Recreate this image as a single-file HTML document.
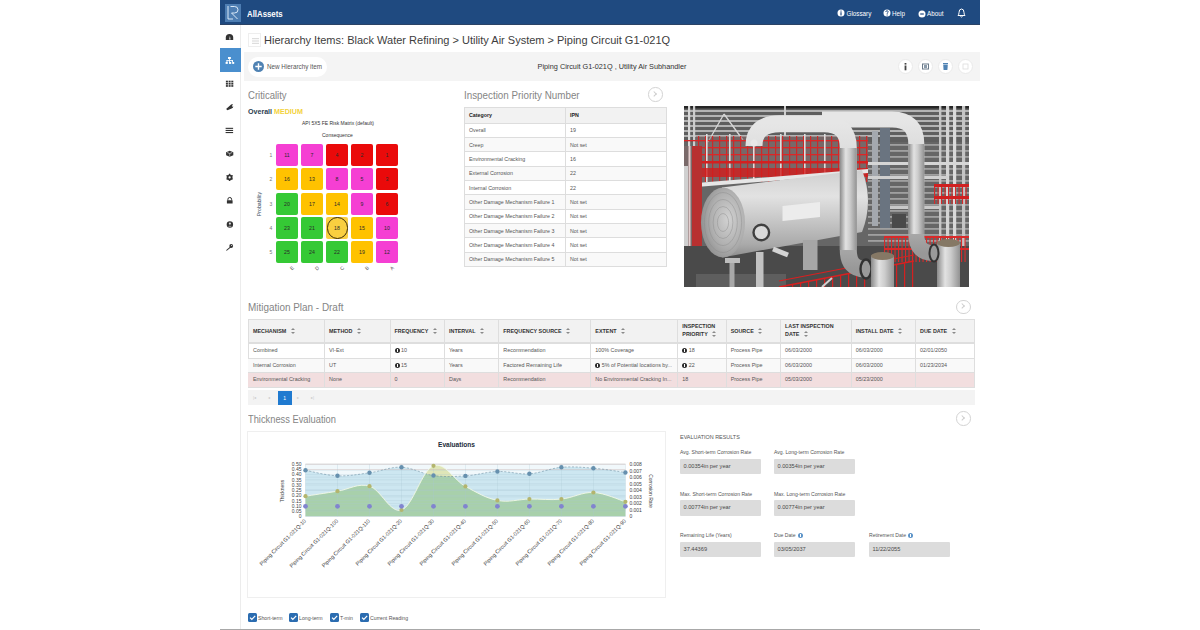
<!DOCTYPE html>
<html><head><meta charset="utf-8">
<style>
*{margin:0;padding:0;box-sizing:border-box}
html,body{width:1200px;height:630px;overflow:hidden;background:#fff;font-family:"Liberation Sans",sans-serif;color:#555}
.a{position:absolute}
#hdr{left:220px;top:0;width:760px;height:24.5px;background:#1f4a80;box-shadow:inset 0 -1px #2b4366}
#logo{left:5px;top:4px;width:16px;height:17.6px;background:#4d7db2}
#brand{left:26.5px;top:8.5px;font-size:9px;font-weight:bold;color:#fff;transform:scaleX(0.87);transform-origin:0 0}
.nav{top:9.5px;font-size:6.3px;color:#fff}
.nav i{position:absolute;left:-6px;top:0.5px;width:6.5px;height:6.5px;border-radius:50%;background:#fff}
#side{left:220px;top:25px;width:21px;height:606px;border-right:1px solid #ececec;background:#fff}
.si{left:0;width:20px;height:23px}
.si svg{position:absolute;left:6px;top:8px}
#act{left:220px;top:48px;width:21px;height:24px;background:#4a8fce}
#title{left:264px;top:34px;font-size:11px;color:#3d3d3d;white-space:nowrap}
#tgl{left:248px;top:33px;width:13px;height:14px;border:1px solid #eee;background:#fff}
#tbar{left:244px;top:52px;width:736px;height:29px;background:#f4f4f4}
#newbtn{left:4px;top:5px;width:79px;height:20px;border-radius:10px;background:#fff}
#tbtitle{left:0;width:736px;top:10px;text-align:center;font-size:7.3px;color:#333}
.cb{top:7px;width:15px;height:15px;border-radius:50%;background:#fff;border:1px solid #eaeaea}
.h2{font-size:11px;color:#858585;font-weight:normal;white-space:nowrap;transform-origin:0 0}
.arr{width:14.5px;height:14.5px;border-radius:50%;border:1.8px solid #d3d3d3}
.arr:after{content:"";position:absolute;left:3px;top:3.7px;width:3.2px;height:3.2px;border-right:1.3px solid #cdcdcd;border-top:1.3px solid #cdcdcd;transform:rotate(45deg)}
.cell{width:22px;height:22px;border-radius:2px;font-size:5.2px;color:#2a2a2a;text-align:center;line-height:22px}
.rl{left:269.5px;font-size:5px;color:#777}
.clb{top:265px;font-size:5px;color:#555;transform:rotate(-45deg)}
.ipn{border-collapse:collapse;width:203px;font-size:5.3px;color:#555}
.ipn td,.ipn th{border:1px solid #ddd;height:14.35px;padding:0 0 0 4px;text-align:left;white-space:nowrap}
.ipn th{font-weight:bold;color:#222}
.ipn td:first-child,.ipn th:first-child{width:101px}
.mth{font-size:5.4px;font-weight:bold;color:#333;line-height:7px;white-space:nowrap}
.mtd{font-size:5.4px;color:#555;white-space:nowrap;line-height:6px}
.srt{display:inline-block;position:relative;width:4px;height:6px;margin-left:4.5px;vertical-align:-1px}
.srt:before,.srt:after{content:"";position:absolute;left:0;border-left:2px solid transparent;border-right:2px solid transparent}
.srt:before{top:0;border-bottom:2.4px solid #8a8a8a}
.srt:after{bottom:0;border-top:2.4px solid #8a8a8a}
.ic{display:inline-block;position:relative;width:5px;height:5px;border-radius:50%;background:#2a2a2a;margin-right:1.5px;vertical-align:-0.8px}
.ic:after{content:"";position:absolute;left:2.1px;top:1px;width:0.9px;height:3px;background:#fff}
.elab{font-size:5.1px;color:#555;white-space:nowrap;line-height:6px}
.ebox{width:80.6px;height:15.6px;background:#dcdcdc;font-size:5.65px;color:#4a4a4a;line-height:15.6px;padding-left:3.5px;white-space:nowrap;border-radius:1px}
.inf{display:inline-block;position:relative;width:5px;height:5px;border-radius:50%;background:#5b93c8;margin-left:2px;vertical-align:-0.8px}
.inf:after{content:"";position:absolute;left:2.1px;top:1px;width:0.9px;height:3px;background:#fff}
.chk{top:612.5px;width:9px;height:9.3px;background:#2b6cb0;border-radius:1.5px}
.chk svg{position:absolute;left:0;top:0}
.ctx{top:614.5px;font-size:5.2px;color:#555;white-space:nowrap}
</style></head><body>
<div id="hdr" class="a">
  <div id="logo" class="a">
    <svg width="16" height="17" viewBox="0 0 16 17" style="position:absolute;left:0;top:0">
      <path d="M3 2 V15 H8" fill="none" stroke="#e8f4ff" stroke-width="0.9"/>
      <path d="M5.5 2.5 H9.5 Q13 2.5 13 5.8 Q13 9 9.5 9 H6.5 L12.5 15" fill="none" stroke="#e8f4ff" stroke-width="0.9"/>
    </svg>
  </div>
  <div id="brand" class="a">AllAssets</div>
  <svg class="a" style="left:617px;top:9px" width="8" height="8" viewBox="0 0 8 8"><circle cx="4" cy="4" r="3.5" fill="#fff"/><rect x="3.4" y="1.6" width="1.2" height="1" fill="#1f4a82"/><rect x="3.4" y="3.2" width="1.2" height="3.2" fill="#1f4a82"/></svg>
  <div class="a nav" style="left:626.5px">Glossary</div>
  <svg class="a" style="left:662.5px;top:9px" width="8" height="8" viewBox="0 0 8 8"><circle cx="4" cy="4" r="3.5" fill="#fff"/><path d="M2.8 3 Q2.8 1.7 4 1.7 Q5.2 1.7 5.2 2.9 Q5.2 3.6 4.2 4.1 V4.9" fill="none" stroke="#1f4a82" stroke-width="0.9"/><rect x="3.6" y="5.5" width="1.1" height="1" fill="#1f4a82"/></svg>
  <div class="a nav" style="left:672px">Help</div>
  <svg class="a" style="left:698px;top:9.5px" width="8" height="8" viewBox="0 0 8 8"><circle cx="4" cy="4" r="3.5" fill="#fff"/><rect x="2.2" y="3.4" width="3.6" height="1.2" fill="#1f4a82"/></svg>
  <div class="a nav" style="left:707px">About</div>
  <svg class="a" style="left:737px;top:7px" width="9" height="11" viewBox="0 0 9 11"><path d="M1 8.5 Q2 7.5 2 5.5 Q2 2 4.5 2 Q7 2 7 5.5 Q7 7.5 8 8.5 Z M3.5 9.5 Q4.5 10.5 5.5 9.5" fill="none" stroke="#fff" stroke-width="1"/></svg>
</div>
<div id="side" class="a"></div>
<div id="act" class="a"></div>

<svg class="a" style="left:220px;top:24px" width="21" height="240" viewBox="0 0 21 240">
 <g fill="#333">
  <path d="M5.8 16 V13.6 A3.7 3.7 0 0 1 13.2 13.6 V16 Z"/>
  <path d="M9.2 15.6 L9.9 11.8 L10.5 15.6 Z" fill="#fff"/>
  <g fill="#fff"><rect x="8" y="33" width="2.9" height="2"/><rect x="6.5" y="36.2" width="6.5" height="0.9"/><rect x="6.5" y="36.2" width="0.9" height="2"/><rect x="12.1" y="36.2" width="0.9" height="2"/><rect x="9.1" y="35" width="0.8" height="3"/><rect x="5.6" y="38" width="2.2" height="1.9"/><rect x="9" y="38" width="2.2" height="1.9"/><rect x="12.2" y="38" width="2" height="1.9"/></g>
  <rect x="5.9" y="56.7" width="2" height="1.7"/><rect x="8.6" y="56.7" width="2" height="1.7"/><rect x="11.3" y="56.7" width="2" height="1.7"/>
  <rect x="5.9" y="58.9" width="2" height="1.7"/><rect x="8.6" y="58.9" width="2" height="1.7"/><rect x="11.3" y="58.9" width="2" height="1.7"/>
  <rect x="5.9" y="61.1" width="2" height="1.7"/><rect x="8.6" y="61.1" width="2" height="1.7"/><rect x="11.3" y="61.1" width="2" height="1.7"/>
  <path d="M6.1 85 L10.3 81.3 A2.3 2.3 0 0 1 13.1 80.6 L11.8 82 L12.3 82.8 L13.3 82.3 A2.3 2.3 0 0 1 11.6 84.5 L7.4 86.3 Z"/>
  <rect x="5.6" y="103.8" width="7.5" height="1.1"/><rect x="5.6" y="105.9" width="7.5" height="1.1"/><rect x="5.6" y="108" width="7.5" height="1.1"/>
  <path d="M9.7 126.8 L13.3 128.3 V131.3 L9.7 132.8 L6.1 131.3 V128.3 Z"/>
  <path d="M7.2 128.5 L9.7 129.5 L12.2 128.5" fill="none" stroke="#fff" stroke-width="0.6"/>
  <path d="M9.7 129.5 V132.3" stroke="#fff" stroke-width="0.5"/>
  <circle cx="9.6" cy="153.4" r="2.9"/>
  <g stroke="#333" stroke-width="1.2"><path d="M9.6 149.8 V157 M6.5 151.6 L12.7 155.2 M6.5 155.2 L12.7 151.6"/></g>
  <circle cx="9.6" cy="153.4" r="1.1" fill="#fff"/>
  <rect x="6.9" y="176.2" width="5.7" height="3.4" rx="0.4"/>
  <path d="M7.9 176.4 V175.3 A1.85 1.85 0 0 1 11.6 175.3 V176.4" fill="none" stroke="#333" stroke-width="1"/>
  <circle cx="9.9" cy="200.5" r="3.2"/>
  <circle cx="9.9" cy="199.6" r="1.1" fill="#ddd"/>
  <path d="M8 202.6 Q9.9 200.8 11.8 202.6 Z" fill="#ddd"/>
  <circle cx="11.2" cy="222" r="1.9"/>
  <path d="M10.4 222.6 L6 226.2 L6.8 226.8 L11.1 223.2 Z"/>
  <circle cx="11.6" cy="221.6" r="0.5" fill="#fff"/>
 </g>
</svg>
<div id="tgl" class="a"><svg class="a" style="left:3px;top:4px" width="7" height="6" viewBox="0 0 7 6"><rect x="0" y="0" width="7" height="1.2" fill="#ddd"/><rect x="0" y="2.4" width="7" height="1.2" fill="#ddd"/><rect x="0" y="4.8" width="7" height="1.2" fill="#ddd"/></svg></div>
<div id="title" class="a">Hierarchy Items: Black Water Refining &gt; Utility Air System &gt; Piping Circuit G1-021Q</div>
<div id="tbar" class="a">
  <div id="newbtn" class="a"><div class="a" style="left:4.5px;top:3.9px;width:11px;height:11px;border-radius:50%;background:#4f82b3"></div><svg class="a" style="left:4.5px;top:3.9px" width="11" height="11" viewBox="0 0 11 11"><path d="M5.5 2.3 V8.7 M2.3 5.5 H8.7" stroke="#fff" stroke-width="1.4"/></svg><div class="a" style="left:19px;top:6px;font-size:6.3px;color:#555;white-space:nowrap">New Hierarchy item</div></div>
  <div class="a cb" style="left:653.5px"><svg class="a" style="left:0;top:0" width="13" height="13" viewBox="0 0 13 13"><rect x="5.6" y="3" width="1.8" height="1.6" fill="#444"/><rect x="5.6" y="5.5" width="1.8" height="4.8" fill="#444"/></svg></div>
  <div class="a cb" style="left:673.5px"><svg class="a" style="left:0;top:0" width="13" height="13" viewBox="0 0 13 13"><rect x="3.5" y="4" width="6" height="5" fill="none" stroke="#6a7a8a" stroke-width="1"/><rect x="5" y="5" width="3" height="3" fill="#8a9aaa"/></svg></div>
  <div class="a cb" style="left:694px"><svg class="a" style="left:0;top:0" width="13" height="13" viewBox="0 0 13 13"><rect x="4" y="3" width="5" height="1" fill="#4f82b3"/><path d="M4.2 4.5 H8.8 L8.4 10 H4.6 Z" fill="#4f82b3"/></svg></div>
  <div class="a cb" style="left:714px"><svg class="a" style="left:0;top:0" width="13" height="13" viewBox="0 0 13 13"><rect x="4" y="4" width="5" height="5" fill="none" stroke="#ddd" stroke-width="0.8"/></svg></div>
  <div id="tbtitle" class="a">Piping Circuit G1-021Q , Utility Air Subhandler</div>
</div>

<div class="a h2" style="left:248px;top:89px;transform:scaleX(0.866)">Criticality</div>
<div class="a" style="left:248px;top:108px;font-size:7.1px;font-weight:bold;color:#2c3e50">Overall <span style="color:#f3d23c">MEDIUM</span></div>
<div class="a" style="left:302px;top:120px;font-size:5px;color:#333;white-space:nowrap">API 5X5 FE Risk Matrix (default)</div>
<div class="a" style="left:322px;top:131.7px;font-size:5px;color:#333">Consequence</div>
<div class="a cell" style="left:276px;top:144px;background:#f53fd3">11</div>
<div class="a cell" style="left:301px;top:144px;background:#f53fd3">7</div>
<div class="a cell" style="left:326px;top:144px;background:#ea0a0a">4</div>
<div class="a cell" style="left:351px;top:144px;background:#ea0a0a">2</div>
<div class="a cell" style="left:376px;top:144px;background:#ea0a0a">1</div>
<div class="a cell" style="left:276px;top:168.3px;background:#ffc200">16</div>
<div class="a cell" style="left:301px;top:168.3px;background:#ffc200">13</div>
<div class="a cell" style="left:326px;top:168.3px;background:#f53fd3">8</div>
<div class="a cell" style="left:351px;top:168.3px;background:#f53fd3">5</div>
<div class="a cell" style="left:376px;top:168.3px;background:#ea0a0a">3</div>
<div class="a cell" style="left:276px;top:192.6px;background:#35c935">20</div>
<div class="a cell" style="left:301px;top:192.6px;background:#ffc200">17</div>
<div class="a cell" style="left:326px;top:192.6px;background:#ffc200">14</div>
<div class="a cell" style="left:351px;top:192.6px;background:#f53fd3">9</div>
<div class="a cell" style="left:376px;top:192.6px;background:#ea0a0a">6</div>
<div class="a cell" style="left:276px;top:217px;background:#35c935">23</div>
<div class="a cell" style="left:301px;top:217px;background:#35c935">21</div>
<div class="a cell" style="left:326px;top:217px;background:#f9cf40">18</div>
<div class="a cell" style="left:351px;top:217px;background:#ffc200">15</div>
<div class="a cell" style="left:376px;top:217px;background:#f53fd3">10</div>
<div class="a cell" style="left:276px;top:241.3px;background:#35c935">25</div>
<div class="a cell" style="left:301px;top:241.3px;background:#35c935">24</div>
<div class="a cell" style="left:326px;top:241.3px;background:#35c935">22</div>
<div class="a cell" style="left:351px;top:241.3px;background:#ffc200">19</div>
<div class="a cell" style="left:376px;top:241.3px;background:#f53fd3">12</div>

<div class="a" style="left:326.5px;top:217px;width:21.5px;height:21.5px;border:1.5px solid #3a2c08;border-radius:50%"></div>
<div class="a rl" style="top:152px">1</div><div class="a rl" style="top:176.3px">2</div><div class="a rl" style="top:200.6px">3</div><div class="a rl" style="top:225px">4</div><div class="a rl" style="top:249.3px">5</div><div class="a clb" style="left:290.0px">E</div><div class="a clb" style="left:315.0px">D</div><div class="a clb" style="left:340.0px">C</div><div class="a clb" style="left:365.0px">B</div><div class="a clb" style="left:390.0px">A</div>
<div class="a" style="left:244px;top:201px;width:30px;font-size:5.2px;color:#34495e;transform:rotate(-90deg);text-align:center">Probability</div>

<div class="a h2" style="left:464px;top:89px;transform:scaleX(0.892)">Inspection Priority Number</div>
<div class="a arr" style="left:648.3px;top:87.2px"></div>
<table class="a ipn" style="left:464px;top:107px">
<tr style="background:#f2f2f2"><th style="height:15.5px">Category</th><th>IPN</th></tr>
<tr style="background:#fff"><td>Overall</td><td>19</td></tr><tr style="background:#f9f9f9"><td>Creep</td><td>Not set</td></tr><tr style="background:#fff"><td>Environmental Cracking</td><td>16</td></tr><tr style="background:#f9f9f9"><td>External Corrosion</td><td>22</td></tr><tr style="background:#fff"><td>Internal Corrosion</td><td>22</td></tr><tr style="background:#f9f9f9"><td>Other Damage Mechanism Failure 1</td><td>Not set</td></tr><tr style="background:#fff"><td>Other Damage Mechanism Failure 2</td><td>Not set</td></tr><tr style="background:#f9f9f9"><td>Other Damage Mechanism Failure 3</td><td>Not set</td></tr><tr style="background:#fff"><td>Other Damage Mechanism Failure 4</td><td>Not set</td></tr><tr style="background:#f9f9f9"><td>Other Damage Mechanism Failure 5</td><td>Not set</td></tr>
</table>

<svg class="a" style="left:684px;top:106px" width="285" height="181" viewBox="0 0 285 181">
 <defs>
  <linearGradient id="vg" x1="0" y1="0" x2="0" y2="1">
   <stop offset="0" stop-color="#cfcfcf"/><stop offset="0.3" stop-color="#e2e2e2"/><stop offset="0.6" stop-color="#c4c4c4"/><stop offset="0.85" stop-color="#aaaaaa"/><stop offset="1" stop-color="#8c8c8c"/>
  </linearGradient>
  <linearGradient id="pg" x1="0" y1="0" x2="1" y2="0">
   <stop offset="0" stop-color="#8a8a8a"/><stop offset="0.35" stop-color="#e2e2e2"/><stop offset="0.6" stop-color="#cccccc"/><stop offset="1" stop-color="#929292"/>
  </linearGradient>
  <linearGradient id="ph" x1="0" y1="0" x2="0" y2="1">
   <stop offset="0" stop-color="#e6e6e6"/><stop offset="0.5" stop-color="#cfcfcf"/><stop offset="1" stop-color="#989898"/>
  </linearGradient>
  <radialGradient id="hg" cx="0.62" cy="0.45" r="0.7">
   <stop offset="0" stop-color="#d2d2d2"/><stop offset="0.55" stop-color="#b0b0b0"/><stop offset="1" stop-color="#878787"/>
  </radialGradient>
 </defs>
 <rect width="285" height="181" fill="#666"/>
 <rect width="285" height="36" fill="#5e5e5e"/>
 <rect x="0" y="4" width="285" height="2" fill="#bcbcbc" opacity="0.9"/><rect x="0" y="9" width="285" height="2" fill="#bcbcbc" opacity="0.9"/><rect x="0" y="14" width="285" height="2" fill="#bcbcbc" opacity="0.9"/><rect x="0" y="19" width="285" height="2" fill="#bcbcbc" opacity="0.9"/><rect x="0" y="24" width="285" height="2" fill="#bcbcbc" opacity="0.9"/><rect x="0" y="29" width="285" height="2" fill="#bcbcbc" opacity="0.9"/><rect x="184" y="38" width="101" height="1.8" fill="#b4b4b4" opacity="0.75"/><rect x="184" y="44" width="101" height="1.8" fill="#b4b4b4" opacity="0.75"/><rect x="184" y="50" width="101" height="1.8" fill="#b4b4b4" opacity="0.75"/><rect x="184" y="56" width="101" height="1.8" fill="#b4b4b4" opacity="0.75"/><rect x="184" y="62" width="101" height="1.8" fill="#b4b4b4" opacity="0.75"/><rect x="184" y="68" width="101" height="1.8" fill="#b4b4b4" opacity="0.75"/><rect x="184" y="74" width="101" height="1.8" fill="#b4b4b4" opacity="0.75"/><rect x="184" y="80" width="101" height="1.8" fill="#b4b4b4" opacity="0.75"/><rect x="184" y="86" width="101" height="1.8" fill="#b4b4b4" opacity="0.75"/><rect x="184" y="92" width="101" height="1.8" fill="#b4b4b4" opacity="0.75"/><rect x="184" y="98" width="101" height="1.8" fill="#b4b4b4" opacity="0.75"/><rect x="184" y="104" width="101" height="1.8" fill="#b4b4b4" opacity="0.75"/><rect x="184" y="110" width="101" height="1.8" fill="#b4b4b4" opacity="0.75"/><rect x="184" y="116" width="101" height="1.8" fill="#b4b4b4" opacity="0.75"/><rect x="184" y="122" width="101" height="1.8" fill="#b4b4b4" opacity="0.75"/><rect x="184" y="128" width="101" height="1.8" fill="#b4b4b4" opacity="0.75"/><rect x="184" y="134" width="101" height="1.8" fill="#b4b4b4" opacity="0.75"/>
 <rect x="0" y="0" width="285" height="2.5" fill="#262626"/>
 <rect x="4" y="0" width="2.2" height="95" fill="#d8d8d8"/><rect x="9" y="0" width="2.2" height="95" fill="#cccccc"/>
 <path d="M40 8 L24 36 M40 8 L59 34" stroke="#d6d6d6" stroke-width="1.3"/>
 <rect x="100" y="0" width="2" height="30" fill="#cfcfcf"/>
 <rect x="255" y="0" width="2.4" height="150" fill="#c6c6c6"/><rect x="262" y="0" width="3.2" height="150" fill="#d4d4d4"/><rect x="269" y="0" width="3.2" height="150" fill="#dadada"/><rect x="278" y="0" width="3.2" height="150" fill="#c4c4c4"/>
 <rect x="196" y="22" width="10" height="100" fill="#6a7480"/><rect x="188" y="25" width="6" height="95" fill="#a4a8ae"/>
 <rect x="184" y="56" width="101" height="3" fill="#d6d6d6"/><rect x="184" y="70" width="80" height="3" fill="#cfcfcf"/><rect x="206" y="100" width="50" height="3" fill="#c8c8c8"/>
 <rect x="208" y="108" width="14" height="14" fill="#4a4a4a"/>
 <!-- red railing zone -->
 <rect x="12" y="30" width="172" height="46" fill="#8a6a6a" opacity="0.5"/>
 <rect x="14" y="30" width="1.2" height="46" fill="#d42222" opacity="0.9"/><rect x="21" y="30" width="1.2" height="46" fill="#d42222" opacity="0.9"/><rect x="28" y="30" width="1.2" height="46" fill="#d42222" opacity="0.9"/><rect x="35" y="30" width="1.2" height="46" fill="#d42222" opacity="0.9"/><rect x="42" y="30" width="1.2" height="46" fill="#d42222" opacity="0.9"/><rect x="49" y="30" width="1.2" height="46" fill="#d42222" opacity="0.9"/><rect x="56" y="30" width="1.2" height="46" fill="#d42222" opacity="0.9"/><rect x="63" y="30" width="1.2" height="46" fill="#d42222" opacity="0.9"/><rect x="70" y="30" width="1.2" height="46" fill="#d42222" opacity="0.9"/><rect x="77" y="30" width="1.2" height="46" fill="#d42222" opacity="0.9"/><rect x="84" y="30" width="1.2" height="46" fill="#d42222" opacity="0.9"/><rect x="91" y="30" width="1.2" height="46" fill="#d42222" opacity="0.9"/><rect x="98" y="30" width="1.2" height="46" fill="#d42222" opacity="0.9"/><rect x="105" y="30" width="1.2" height="46" fill="#d42222" opacity="0.9"/><rect x="112" y="30" width="1.2" height="46" fill="#d42222" opacity="0.9"/><rect x="119" y="30" width="1.2" height="46" fill="#d42222" opacity="0.9"/><rect x="126" y="30" width="1.2" height="46" fill="#d42222" opacity="0.9"/><rect x="133" y="30" width="1.2" height="46" fill="#d42222" opacity="0.9"/><rect x="140" y="30" width="1.2" height="46" fill="#d42222" opacity="0.9"/><rect x="147" y="30" width="1.2" height="46" fill="#d42222" opacity="0.9"/><rect x="154" y="30" width="1.2" height="46" fill="#d42222" opacity="0.9"/><rect x="161" y="30" width="1.2" height="46" fill="#d42222" opacity="0.9"/><rect x="168" y="30" width="1.2" height="46" fill="#d42222" opacity="0.9"/><rect x="175" y="30" width="1.2" height="46" fill="#d42222" opacity="0.9"/><rect x="182" y="30" width="1.2" height="46" fill="#d42222" opacity="0.9"/><rect x="0" y="34" width="184" height="1.3" fill="#dc2626"/><rect x="0" y="41" width="184" height="1.3" fill="#dc2626"/><rect x="0" y="48" width="184" height="1.3" fill="#dc2626"/><rect x="22" y="28" width="1.6" height="48" fill="#dedede"/><rect x="45" y="28" width="1.6" height="48" fill="#dedede"/><rect x="69" y="28" width="1.6" height="48" fill="#dedede"/><rect x="96" y="28" width="1.6" height="48" fill="#dedede"/><rect x="120" y="28" width="1.6" height="48" fill="#dedede"/><rect x="140" y="28" width="1.6" height="48" fill="#dedede"/>
 <rect x="0" y="55" width="184" height="2.5" fill="#d42020"/>
 <rect x="0" y="62" width="184" height="9" fill="#d21c1c" opacity="0.8"/>
 <path d="M0 78 L184 63 L184 67 L0 82 Z" fill="#e6e6e6"/>
 <rect x="8" y="40" width="10" height="130" fill="#b83030"/><rect x="0" y="40" width="8" height="141" fill="#7a6a6a"/>
 <rect x="4.5" y="40" width="2" height="141" fill="#e6d0d0"/><rect x="0" y="60" width="4" height="80" fill="#d0d0d0"/>
 <!-- floor -->
 <rect x="0" y="140" width="285" height="41" fill="#4a4a4a"/>
 <rect x="12" y="168" width="90" height="13" fill="#5e5e5e"/>
 <!-- right red -->
 <rect x="200.0" y="130" width="1.1" height="26" fill="#d82a2a"/><rect x="203.5" y="130" width="1.1" height="26" fill="#d82a2a"/><rect x="207.0" y="130" width="1.1" height="26" fill="#d82a2a"/><rect x="210.5" y="130" width="1.1" height="26" fill="#d82a2a"/><rect x="214.0" y="130" width="1.1" height="26" fill="#d82a2a"/><rect x="217.5" y="130" width="1.1" height="26" fill="#d82a2a"/><rect x="221.0" y="130" width="1.1" height="26" fill="#d82a2a"/><rect x="224.5" y="130" width="1.1" height="26" fill="#d82a2a"/><rect x="228.0" y="130" width="1.1" height="26" fill="#d82a2a"/><rect x="231.5" y="130" width="1.1" height="26" fill="#d82a2a"/><rect x="235.0" y="130" width="1.1" height="26" fill="#d82a2a"/><rect x="238.5" y="130" width="1.1" height="26" fill="#d82a2a"/><rect x="242.0" y="130" width="1.1" height="26" fill="#d82a2a"/><rect x="245.5" y="130" width="1.1" height="26" fill="#d82a2a"/><rect x="249.0" y="130" width="1.1" height="26" fill="#d82a2a"/><rect x="252.5" y="130" width="1.1" height="26" fill="#d82a2a"/><rect x="256.0" y="130" width="1.1" height="26" fill="#d82a2a"/><rect x="259.5" y="130" width="1.1" height="26" fill="#d82a2a"/><rect x="263.0" y="130" width="1.1" height="26" fill="#d82a2a"/><rect x="266.5" y="130" width="1.1" height="26" fill="#d82a2a"/><rect x="270.0" y="130" width="1.1" height="26" fill="#d82a2a"/><rect x="273.5" y="130" width="1.1" height="26" fill="#d82a2a"/><rect x="277.0" y="130" width="1.1" height="26" fill="#d82a2a"/><rect x="280.5" y="130" width="1.1" height="26" fill="#d82a2a"/><rect x="250.0" y="78" width="1.1" height="20" fill="#d82a2a"/><rect x="253.5" y="78" width="1.1" height="20" fill="#d82a2a"/><rect x="257.0" y="78" width="1.1" height="20" fill="#d82a2a"/><rect x="260.5" y="78" width="1.1" height="20" fill="#d82a2a"/><rect x="264.0" y="78" width="1.1" height="20" fill="#d82a2a"/><rect x="267.5" y="78" width="1.1" height="20" fill="#d82a2a"/><rect x="271.0" y="78" width="1.1" height="20" fill="#d82a2a"/><rect x="274.5" y="78" width="1.1" height="20" fill="#d82a2a"/><rect x="278.0" y="78" width="1.1" height="20" fill="#d82a2a"/><rect x="281.5" y="78" width="1.1" height="20" fill="#d82a2a"/>
 <rect x="200" y="130" width="85" height="2" fill="#d82a2a"/><rect x="200" y="142" width="85" height="2" fill="#d82a2a"/>
 <rect x="250" y="78" width="35" height="3" fill="#d02020"/><rect x="250" y="90" width="35" height="3" fill="#d02020"/>
 <rect x="100" y="180.1" width="1.2" height="4.0" fill="#d42020"/><rect x="108" y="178.5" width="1.2" height="5.5" fill="#d42020"/><rect x="116" y="177.0" width="1.2" height="7.0" fill="#d42020"/><rect x="124" y="175.5" width="1.2" height="8.5" fill="#d42020"/><rect x="132" y="174.0" width="1.2" height="10.0" fill="#d42020"/><rect x="140" y="172.4" width="1.2" height="11.6" fill="#d42020"/><rect x="148" y="170.9" width="1.2" height="13.1" fill="#d42020"/><rect x="156" y="169.4" width="1.2" height="14.6" fill="#d42020"/><rect x="164" y="167.9" width="1.2" height="16.1" fill="#d42020"/><rect x="172" y="166.4" width="1.2" height="17.6" fill="#d42020"/><rect x="180" y="164.8" width="1.2" height="19.1" fill="#d42020"/><rect x="188" y="163.3" width="1.2" height="20.7" fill="#d42020"/><rect x="196" y="161.8" width="1.2" height="22.2" fill="#d42020"/><rect x="204" y="160.3" width="1.2" height="23.7" fill="#d42020"/><rect x="212" y="158.8" width="1.2" height="25.2" fill="#d42020"/><rect x="220" y="157.2" width="1.2" height="26.8" fill="#d42020"/><rect x="228" y="155.7" width="1.2" height="28.3" fill="#d42020"/>
 <path d="M95 181 L230 155" stroke="#d82020" stroke-width="1.6"/><path d="M95 175 L230 149" stroke="#d82020" stroke-width="1.2"/>
 <!-- vessel -->
 <path d="M38 81.5 L178 64 Q190 95 178 126 L38 151.5 Z" fill="url(#vg)"/>
 <path d="M98.5 100 L136 96 L136 111 L98.5 115 Z" fill="#ececec"/>
 <ellipse cx="39" cy="116.5" rx="22" ry="35" fill="url(#hg)"/>
 <ellipse cx="39" cy="116.5" rx="5.6" ry="9.0" fill="none" stroke="#8a8a8a" stroke-width="0.7" opacity="0.6"/><ellipse cx="39" cy="116.5" rx="9.9" ry="16.0" fill="none" stroke="#8a8a8a" stroke-width="0.7" opacity="0.6"/><ellipse cx="39" cy="116.5" rx="14.3" ry="23.0" fill="none" stroke="#8a8a8a" stroke-width="0.7" opacity="0.6"/><ellipse cx="39" cy="116.5" rx="18.6" ry="30.0" fill="none" stroke="#8a8a8a" stroke-width="0.7" opacity="0.6"/>
 <circle cx="77.3" cy="126.5" r="7.8" fill="#dadada" stroke="#404040" stroke-width="2.4"/>
 <rect x="41" y="152" width="15" height="5" fill="#bdbdbd"/><rect x="45.5" y="157" width="5" height="24" fill="#a8a8a8"/>
 <rect x="72" y="146" width="7.5" height="35" fill="#c2c2c2"/>
 <rect x="119" y="134" width="14.5" height="30" fill="#a6a6a6"/>
 <path d="M89 143 L104 149" stroke="#d4d4d4" stroke-width="5"/>
 <path d="M138 181 L148 172" stroke="#d0d0d0" stroke-width="2"/>
 <!-- pipe 2 -->
 <path d="M138 13.4 H208 Q232.3 13.4 232.3 38 V128 Q232.3 147 249 147" fill="none" stroke="url(#ph)" stroke-width="16"/>
 <rect x="224.3" y="38" width="16" height="90" fill="url(#pg)"/>
 <!-- pipe 1 -->
 <path d="M70 40 Q70 17.7 96 17.7 H140 Q164.3 17.7 164.3 42 V144 Q164.3 163 181 163" fill="none" stroke="url(#ph)" stroke-width="17"/>
 <rect x="155.8" y="42" width="17" height="102" fill="url(#pg)"/>
 <circle cx="70" cy="37" r="3.5" fill="#e8e8e8"/>
 <ellipse cx="182" cy="163" rx="5.5" ry="9.5" fill="#9a9a9a" stroke="#333" stroke-width="2.4"/>
 <!-- tanks -->
 <rect x="187" y="149.5" width="23" height="32" fill="url(#pg)"/>
 <ellipse cx="198.5" cy="150" rx="11.5" ry="4" fill="#857865"/>
 <rect x="253" y="136.5" width="23" height="45" fill="url(#pg)"/>
 <ellipse cx="264.5" cy="137" rx="11.5" ry="4" fill="#857865"/>
 <ellipse cx="250" cy="147" rx="4.5" ry="8.5" fill="#9a9a9a" stroke="#333" stroke-width="2"/>
</svg>

<div class="a h2" style="left:248px;top:300.5px;transform:scaleX(0.902)">Mitigation Plan - Draft</div>
<div class="a arr" style="left:956px;top:299.5px"></div>
<div class="a" style="left:248px;top:319px;width:727px;height:68px;border:1px solid #dedede;border-bottom:none"></div><div class="a" style="left:248px;top:319px;width:727px;height:24px;background:#f2f2f2;border:1px solid #dedede"></div><div class="a" style="left:248px;top:357.5px;width:727px;height:14.5px;background:#f9f9f9"></div><div class="a" style="left:248px;top:372px;width:727px;height:14.7px;background:#f2dedf"></div><div class="a" style="left:248px;top:343px;width:727px;height:1px;background:#dedede"></div><div class="a" style="left:248px;top:357.5px;width:727px;height:1px;background:#dedede"></div><div class="a" style="left:248px;top:372px;width:727px;height:1px;background:#dedede"></div><div class="a" style="left:248px;top:386.7px;width:727px;height:1px;background:#dedede"></div><div class="a" style="left:324px;top:319px;width:1px;height:68px;background:#dedede"></div><div class="a" style="left:389.5px;top:319px;width:1px;height:68px;background:#dedede"></div><div class="a" style="left:444px;top:319px;width:1px;height:68px;background:#dedede"></div><div class="a" style="left:498.3px;top:319px;width:1px;height:68px;background:#dedede"></div><div class="a" style="left:590.3px;top:319px;width:1px;height:68px;background:#dedede"></div><div class="a" style="left:677.3px;top:319px;width:1px;height:68px;background:#dedede"></div><div class="a" style="left:725.7px;top:319px;width:1px;height:68px;background:#dedede"></div><div class="a" style="left:780px;top:319px;width:1px;height:68px;background:#dedede"></div><div class="a" style="left:850.7px;top:319px;width:1px;height:68px;background:#dedede"></div><div class="a" style="left:915px;top:319px;width:1px;height:68px;background:#dedede"></div><div class="a" style="left:974px;top:319px;width:1px;height:68px;background:#dedede"></div><div class="a mth" style="left:253px;top:327.8px">MECHANISM<span class="srt"></span></div><div class="a mth" style="left:329px;top:327.8px">METHOD<span class="srt"></span></div><div class="a mth" style="left:394.5px;top:327.8px">FREQUENCY<span class="srt"></span></div><div class="a mth" style="left:449px;top:327.8px">INTERVAL<span class="srt"></span></div><div class="a mth" style="left:503.3px;top:327.8px">FREQUENCY SOURCE<span class="srt"></span></div><div class="a mth" style="left:595.3px;top:327.8px">EXTENT<span class="srt"></span></div><div class="a mth" style="left:682.3px;top:323.3px;line-height:7.8px">INSPECTION<br>PRIORITY<span class="srt"></span></div><div class="a mth" style="left:730.7px;top:327.8px">SOURCE<span class="srt"></span></div><div class="a mth" style="left:785px;top:323.3px;line-height:7.8px">LAST INSPECTION<br>DATE<span class="srt"></span></div><div class="a mth" style="left:855.7px;top:327.8px">INSTALL DATE<span class="srt"></span></div><div class="a mth" style="left:920px;top:327.8px">DUE DATE<span class="srt"></span></div><div class="a mtd" style="left:253px;top:347.3px">Combined</div><div class="a mtd" style="left:329px;top:347.3px">VI-Ext</div><div class="a mtd" style="left:394.5px;top:347.3px"><b class="ic"></b>10</div><div class="a mtd" style="left:449px;top:347.3px">Years</div><div class="a mtd" style="left:503.3px;top:347.3px">Recommendation</div><div class="a mtd" style="left:595.3px;top:347.3px">100% Coverage</div><div class="a mtd" style="left:682.3px;top:347.3px"><b class="ic"></b>18</div><div class="a mtd" style="left:730.7px;top:347.3px">Process Pipe</div><div class="a mtd" style="left:785px;top:347.3px">06/03/2000</div><div class="a mtd" style="left:855.7px;top:347.3px">06/03/2000</div><div class="a mtd" style="left:920px;top:347.3px">02/01/2050</div><div class="a mtd" style="left:253px;top:361.8px">Internal Corrosion</div><div class="a mtd" style="left:329px;top:361.8px">UT</div><div class="a mtd" style="left:394.5px;top:361.8px"><b class="ic"></b>15</div><div class="a mtd" style="left:449px;top:361.8px">Years</div><div class="a mtd" style="left:503.3px;top:361.8px">Factored Remaining Life</div><div class="a mtd" style="left:595.3px;top:361.8px"><b class="ic"></b>5% of Potential locations by...</div><div class="a mtd" style="left:682.3px;top:361.8px"><b class="ic"></b>22</div><div class="a mtd" style="left:730.7px;top:361.8px">Process Pipe</div><div class="a mtd" style="left:785px;top:361.8px">06/03/2000</div><div class="a mtd" style="left:855.7px;top:361.8px">06/03/2000</div><div class="a mtd" style="left:920px;top:361.8px">01/23/2034</div><div class="a mtd" style="left:253px;top:376.4px">Environmental Cracking</div><div class="a mtd" style="left:329px;top:376.4px">None</div><div class="a mtd" style="left:394.5px;top:376.4px">0</div><div class="a mtd" style="left:449px;top:376.4px">Days</div><div class="a mtd" style="left:503.3px;top:376.4px">Recommendation</div><div class="a mtd" style="left:595.3px;top:376.4px">No Environmental Cracking In...</div><div class="a mtd" style="left:682.3px;top:376.4px">18</div><div class="a mtd" style="left:730.7px;top:376.4px">Process Pipe</div><div class="a mtd" style="left:785px;top:376.4px">05/03/2000</div><div class="a mtd" style="left:855.7px;top:376.4px">05/23/2000</div><div class="a mtd" style="left:920px;top:376.4px"></div><div class="a" style="left:248px;top:390px;width:727px;height:15px;background:#f3f3f3"></div><div class="a" style="left:278px;top:390.5px;width:13.5px;height:14px;background:#1f7ad0;color:#fff;font-size:5px;text-align:center;line-height:14px">1</div><div class="a" style="left:253px;top:395px;font-size:4px;color:#c8c8c8">|◂</div><div class="a" style="left:268px;top:395px;font-size:4px;color:#c8c8c8">◂</div><div class="a" style="left:297px;top:395px;font-size:4px;color:#c8c8c8">▸</div><div class="a" style="left:311px;top:395px;font-size:4px;color:#c8c8c8">▸|</div>

<div class="a h2" style="left:248px;top:413px;transform:scaleX(0.846)">Thickness Evaluation</div>
<div class="a arr" style="left:956px;top:411px"></div>
<div class="a" style="left:247px;top:431px;width:419px;height:167px;border:1px solid #efefef"></div>
<svg class="a" style="left:247px;top:431px" width="420" height="168" viewBox="0 0 420 168" font-family="Liberation Sans" font-size="5" fill="#404040">
 <text x="209.5" y="15.5" text-anchor="middle" font-size="6.6" font-weight="bold" fill="#1c2b3a">Evaluations</text>
 <rect x="58.5" y="33.2" width="319.9" height="52.1" fill="#f1f8fb"/>
 <defs><clipPath id="bclip"><path d="M58.5 39.3 C64.3 40.3 79.0 44.4 90.5 44.8 C102.0 45.3 111.0 43.3 122.5 41.8 C134.0 40.3 143.0 35.7 154.5 36.2 C166.0 36.7 174.9 42.9 186.5 44.5 C198.0 46.1 206.9 45.6 218.4 44.9 C230.0 44.2 238.9 40.9 250.4 40.5 C262.0 40.1 270.9 43.6 282.4 42.8 C293.9 42.0 302.9 37.3 314.4 36.3 C325.9 35.3 334.9 36.3 346.4 37.2 C357.9 38.1 372.6 40.7 378.4 41.5 L378.4 85.29999999999995 L58.5 85.29999999999995 Z"/></clipPath></defs>
 <path d="M58.5 39.3 C64.3 40.3 79.0 44.4 90.5 44.8 C102.0 45.3 111.0 43.3 122.5 41.8 C134.0 40.3 143.0 35.7 154.5 36.2 C166.0 36.7 174.9 42.9 186.5 44.5 C198.0 46.1 206.9 45.6 218.4 44.9 C230.0 44.2 238.9 40.9 250.4 40.5 C262.0 40.1 270.9 43.6 282.4 42.8 C293.9 42.0 302.9 37.3 314.4 36.3 C325.9 35.3 334.9 36.3 346.4 37.2 C357.9 38.1 372.6 40.7 378.4 41.5 L378.4 85.29999999999995 L58.5 85.29999999999995 Z" fill="#cde7f1"/>
 <path d="M58.5 65.2 C64.3 64.3 79.0 62.0 90.5 60.2 C102.0 58.4 111.0 51.8 122.5 55.2 C134.0 58.6 143.0 82.7 154.5 79.0 C166.0 75.3 174.9 39.0 186.5 34.8 C198.0 30.6 206.9 49.2 218.4 55.4 C230.0 61.6 238.9 67.1 250.4 69.4 C262.0 71.7 270.9 68.3 282.4 68.1 C293.9 67.9 302.9 69.3 314.4 68.1 C325.9 66.9 334.9 61.0 346.4 61.5 C357.9 62.0 372.6 69.1 378.4 70.8 L378.4 85.29999999999995 L58.5 85.29999999999995 Z" fill="#dfe6b8"/>
 <path d="M58.5 65.2 C64.3 64.3 79.0 62.0 90.5 60.2 C102.0 58.4 111.0 51.8 122.5 55.2 C134.0 58.6 143.0 82.7 154.5 79.0 C166.0 75.3 174.9 39.0 186.5 34.8 C198.0 30.6 206.9 49.2 218.4 55.4 C230.0 61.6 238.9 67.1 250.4 69.4 C262.0 71.7 270.9 68.3 282.4 68.1 C293.9 67.9 302.9 69.3 314.4 68.1 C325.9 66.9 334.9 61.0 346.4 61.5 C357.9 62.0 372.6 69.1 378.4 70.8 L378.4 85.29999999999995 L58.5 85.29999999999995 Z" fill="#a8d0ab" clip-path="url(#bclip)"/>
 
 <line x1="58.5" y1="33.2" x2="378.4" y2="33.2" stroke="#a9c6d4" stroke-width="0.45" opacity="0.6"/><line x1="58.5" y1="38.4" x2="378.4" y2="38.4" stroke="#a9c6d4" stroke-width="0.45" opacity="0.6"/><line x1="58.5" y1="43.6" x2="378.4" y2="43.6" stroke="#a9c6d4" stroke-width="0.45" opacity="0.6"/><line x1="58.5" y1="48.8" x2="378.4" y2="48.8" stroke="#a9c6d4" stroke-width="0.45" opacity="0.6"/><line x1="58.5" y1="54.0" x2="378.4" y2="54.0" stroke="#a9c6d4" stroke-width="0.45" opacity="0.6"/><line x1="58.5" y1="59.2" x2="378.4" y2="59.2" stroke="#a9c6d4" stroke-width="0.45" opacity="0.6"/><line x1="58.5" y1="64.5" x2="378.4" y2="64.5" stroke="#a9c6d4" stroke-width="0.45" opacity="0.6"/><line x1="58.5" y1="69.7" x2="378.4" y2="69.7" stroke="#a9c6d4" stroke-width="0.45" opacity="0.6"/><line x1="58.5" y1="74.9" x2="378.4" y2="74.9" stroke="#a9c6d4" stroke-width="0.45" opacity="0.6"/><line x1="58.5" y1="80.1" x2="378.4" y2="80.1" stroke="#a9c6d4" stroke-width="0.45" opacity="0.6"/><line x1="58.5" y1="85.3" x2="378.4" y2="85.3" stroke="#a9c6d4" stroke-width="0.45" opacity="0.6"/><line x1="58.5" y1="33.2" x2="378.4" y2="33.2" stroke="#a9c6d4" stroke-width="0.45" opacity="0.6"/><line x1="58.5" y1="39.7" x2="378.4" y2="39.7" stroke="#a9c6d4" stroke-width="0.45" opacity="0.6"/><line x1="58.5" y1="46.2" x2="378.4" y2="46.2" stroke="#a9c6d4" stroke-width="0.45" opacity="0.6"/><line x1="58.5" y1="52.7" x2="378.4" y2="52.7" stroke="#a9c6d4" stroke-width="0.45" opacity="0.6"/><line x1="58.5" y1="59.2" x2="378.4" y2="59.2" stroke="#a9c6d4" stroke-width="0.45" opacity="0.6"/><line x1="58.5" y1="65.8" x2="378.4" y2="65.8" stroke="#a9c6d4" stroke-width="0.45" opacity="0.6"/><line x1="58.5" y1="72.3" x2="378.4" y2="72.3" stroke="#a9c6d4" stroke-width="0.45" opacity="0.6"/><line x1="58.5" y1="78.8" x2="378.4" y2="78.8" stroke="#a9c6d4" stroke-width="0.45" opacity="0.6"/><line x1="58.5" y1="85.3" x2="378.4" y2="85.3" stroke="#a9c6d4" stroke-width="0.45" opacity="0.6"/><line x1="58.5" y1="33.19999999999999" x2="58.5" y2="85.29999999999995" stroke="#a9c6d4" stroke-width="0.45" opacity="0.6"/><line x1="90.5" y1="33.19999999999999" x2="90.5" y2="85.29999999999995" stroke="#a9c6d4" stroke-width="0.45" opacity="0.6"/><line x1="122.5" y1="33.19999999999999" x2="122.5" y2="85.29999999999995" stroke="#a9c6d4" stroke-width="0.45" opacity="0.6"/><line x1="154.5" y1="33.19999999999999" x2="154.5" y2="85.29999999999995" stroke="#a9c6d4" stroke-width="0.45" opacity="0.6"/><line x1="186.5" y1="33.19999999999999" x2="186.5" y2="85.29999999999995" stroke="#a9c6d4" stroke-width="0.45" opacity="0.6"/><line x1="218.4" y1="33.19999999999999" x2="218.4" y2="85.29999999999995" stroke="#a9c6d4" stroke-width="0.45" opacity="0.6"/><line x1="250.4" y1="33.19999999999999" x2="250.4" y2="85.29999999999995" stroke="#a9c6d4" stroke-width="0.45" opacity="0.6"/><line x1="282.4" y1="33.19999999999999" x2="282.4" y2="85.29999999999995" stroke="#a9c6d4" stroke-width="0.45" opacity="0.6"/><line x1="314.4" y1="33.19999999999999" x2="314.4" y2="85.29999999999995" stroke="#a9c6d4" stroke-width="0.45" opacity="0.6"/><line x1="346.4" y1="33.19999999999999" x2="346.4" y2="85.29999999999995" stroke="#a9c6d4" stroke-width="0.45" opacity="0.6"/><line x1="378.4" y1="33.19999999999999" x2="378.4" y2="85.29999999999995" stroke="#a9c6d4" stroke-width="0.45" opacity="0.6"/>
 <line x1="58.5" y1="33.19999999999999" x2="378.4" y2="33.19999999999999" stroke="#e4b4a8" stroke-width="0.6" opacity="0.55"/>
 <line x1="58.5" y1="38.69999999999999" x2="378.4" y2="38.69999999999999" stroke="#e4b4a8" stroke-width="0.6" opacity="0.55"/>
 <path d="M58.5 39.3 C64.3 40.3 79.0 44.4 90.5 44.8 C102.0 45.3 111.0 43.3 122.5 41.8 C134.0 40.3 143.0 35.7 154.5 36.2 C166.0 36.7 174.9 42.9 186.5 44.5 C198.0 46.1 206.9 45.6 218.4 44.9 C230.0 44.2 238.9 40.9 250.4 40.5 C262.0 40.1 270.9 43.6 282.4 42.8 C293.9 42.0 302.9 37.3 314.4 36.3 C325.9 35.3 334.9 36.3 346.4 37.2 C357.9 38.1 372.6 40.7 378.4 41.5" fill="none" stroke="#5f8399" stroke-width="0.6" stroke-dasharray="2.2 1.6" opacity="0.85"/>
 <path d="M58.5 65.2 C64.3 64.3 79.0 62.0 90.5 60.2 C102.0 58.4 111.0 51.8 122.5 55.2 C134.0 58.6 143.0 82.7 154.5 79.0 C166.0 75.3 174.9 39.0 186.5 34.8 C198.0 30.6 206.9 49.2 218.4 55.4 C230.0 61.6 238.9 67.1 250.4 69.4 C262.0 71.7 270.9 68.3 282.4 68.1 C293.9 67.9 302.9 69.3 314.4 68.1 C325.9 66.9 334.9 61.0 346.4 61.5 C357.9 62.0 372.6 69.1 378.4 70.8" fill="none" stroke="#f2f8ea" stroke-width="0.9"/>
 <circle cx="58.5" cy="39.3" r="2.2" fill="#6690ae"/><circle cx="90.5" cy="44.8" r="2.2" fill="#6690ae"/><circle cx="122.5" cy="41.8" r="2.2" fill="#6690ae"/><circle cx="154.5" cy="36.2" r="2.2" fill="#6690ae"/><circle cx="186.5" cy="44.5" r="2.2" fill="#6690ae"/><circle cx="218.4" cy="44.9" r="2.2" fill="#6690ae"/><circle cx="250.4" cy="40.5" r="2.2" fill="#6690ae"/><circle cx="282.4" cy="42.8" r="2.2" fill="#6690ae"/><circle cx="314.4" cy="36.3" r="2.2" fill="#6690ae"/><circle cx="346.4" cy="37.2" r="2.2" fill="#6690ae"/><circle cx="378.4" cy="41.5" r="2.2" fill="#6690ae"/><circle cx="58.5" cy="65.2" r="2.1" fill="#b3b56e"/><circle cx="90.5" cy="60.2" r="2.1" fill="#b3b56e"/><circle cx="122.5" cy="55.2" r="2.1" fill="#b3b56e"/><circle cx="154.5" cy="79.0" r="2.1" fill="#b3b56e"/><circle cx="186.5" cy="34.8" r="2.1" fill="#b3b56e"/><circle cx="218.4" cy="55.4" r="2.1" fill="#b3b56e"/><circle cx="250.4" cy="69.4" r="2.1" fill="#b3b56e"/><circle cx="282.4" cy="68.1" r="2.1" fill="#b3b56e"/><circle cx="314.4" cy="68.1" r="2.1" fill="#b3b56e"/><circle cx="346.4" cy="61.5" r="2.1" fill="#b3b56e"/><circle cx="378.4" cy="70.8" r="2.1" fill="#b3b56e"/><circle cx="58.5" cy="75.3" r="2.4" fill="#8184cf"/><circle cx="90.5" cy="75.3" r="2.4" fill="#8184cf"/><circle cx="122.5" cy="75.3" r="2.4" fill="#8184cf"/><circle cx="154.5" cy="75.3" r="2.4" fill="#8184cf"/><circle cx="186.5" cy="75.3" r="2.4" fill="#8184cf"/><circle cx="218.4" cy="75.3" r="2.4" fill="#8184cf"/><circle cx="250.4" cy="75.3" r="2.4" fill="#8184cf"/><circle cx="282.4" cy="75.3" r="2.4" fill="#8184cf"/><circle cx="314.4" cy="75.3" r="2.4" fill="#8184cf"/><circle cx="346.4" cy="75.3" r="2.4" fill="#8184cf"/><circle cx="378.4" cy="75.3" r="2.4" fill="#8184cf"/>
 <text x="54.5" y="35.0" text-anchor="end">0.50</text><text x="54.5" y="40.2" text-anchor="end">0.45</text><text x="54.5" y="45.4" text-anchor="end">0.40</text><text x="54.5" y="50.6" text-anchor="end">0.35</text><text x="54.5" y="55.8" text-anchor="end">0.30</text><text x="54.5" y="61.0" text-anchor="end">0.25</text><text x="54.5" y="66.3" text-anchor="end">0.20</text><text x="54.5" y="71.5" text-anchor="end">0.15</text><text x="54.5" y="76.7" text-anchor="end">0.10</text><text x="54.5" y="81.9" text-anchor="end">0.05</text><text x="54.5" y="87.1" text-anchor="end">0</text><text x="382.4" y="35.0">0.008</text><text x="382.4" y="41.5">0.007</text><text x="382.4" y="48.0">0.006</text><text x="382.4" y="54.5">0.005</text><text x="382.4" y="61.0">0.004</text><text x="382.4" y="67.6">0.003</text><text x="382.4" y="74.1">0.002</text><text x="382.4" y="80.6">0.001</text><text x="382.4" y="87.1">0</text><text transform="translate(59.5,90.29999999999995) rotate(-45)" text-anchor="end" font-size="5.4">Piping Circuit G1-021Q-10</text><text transform="translate(91.5,90.29999999999995) rotate(-45)" text-anchor="end" font-size="5.4">Piping Circuit G1-021Q-100</text><text transform="translate(123.5,90.29999999999995) rotate(-45)" text-anchor="end" font-size="5.4">Piping Circuit G1-021Q-110</text><text transform="translate(155.5,90.29999999999995) rotate(-45)" text-anchor="end" font-size="5.4">Piping Circuit G1-021Q-20</text><text transform="translate(187.5,90.29999999999995) rotate(-45)" text-anchor="end" font-size="5.4">Piping Circuit G1-021Q-30</text><text transform="translate(219.4,90.29999999999995) rotate(-45)" text-anchor="end" font-size="5.4">Piping Circuit G1-021Q-40</text><text transform="translate(251.4,90.29999999999995) rotate(-45)" text-anchor="end" font-size="5.4">Piping Circuit G1-021Q-50</text><text transform="translate(283.4,90.29999999999995) rotate(-45)" text-anchor="end" font-size="5.4">Piping Circuit G1-021Q-60</text><text transform="translate(315.4,90.29999999999995) rotate(-45)" text-anchor="end" font-size="5.4">Piping Circuit G1-021Q-70</text><text transform="translate(347.4,90.29999999999995) rotate(-45)" text-anchor="end" font-size="5.4">Piping Circuit G1-021Q-80</text><text transform="translate(379.4,90.29999999999995) rotate(-45)" text-anchor="end" font-size="5.4">Piping Circuit G1-021Q-90</text>
 <text transform="translate(37,60) rotate(-90)" text-anchor="middle">Thickness</text>
 <text transform="translate(402,60) rotate(90)" text-anchor="middle">Corrosion Rate</text>
</svg>
<div class="a" style="left:680px;top:434px;font-size:5.45px;color:#555">EVALUATION RESULTS</div><div class="a elab" style="left:680px;top:449.3px">Avg. Short-term Corrosion Rate</div><div class="a ebox" style="left:680px;top:458.9px">0.00354in per year</div><div class="a elab" style="left:774px;top:449.3px">Avg. Long-term Corrosion Rate</div><div class="a ebox" style="left:774px;top:458.9px">0.00354in per year</div><div class="a elab" style="left:680px;top:490.6px">Max. Short-term Corrosion Rate</div><div class="a ebox" style="left:680px;top:500.2px">0.00774in per year</div><div class="a elab" style="left:774px;top:490.6px">Max. Long-term Corrosion Rate</div><div class="a ebox" style="left:774px;top:500.2px">0.00774in per year</div><div class="a elab" style="left:680px;top:532px">Remaining Life (Years)</div><div class="a ebox" style="left:680px;top:541.6px">37.44369</div><div class="a elab" style="left:774px;top:532px">Due Date<span class="inf"></span></div><div class="a ebox" style="left:774px;top:541.6px">03/05/2037</div><div class="a elab" style="left:869px;top:532px">Retirement Date<span class="inf"></span></div><div class="a ebox" style="left:869px;top:541.6px">11/22/2055</div><div class="a chk" style="left:248px"><svg width="9" height="9" viewBox="0 0 9 9"><path d="M2 4.6 L3.8 6.3 L7.2 2.8" fill="none" stroke="#fff" stroke-width="1.2"/></svg></div><div class="a ctx" style="left:258px">Short-term</div><div class="a chk" style="left:289px"><svg width="9" height="9" viewBox="0 0 9 9"><path d="M2 4.6 L3.8 6.3 L7.2 2.8" fill="none" stroke="#fff" stroke-width="1.2"/></svg></div><div class="a ctx" style="left:299px">Long-term</div><div class="a chk" style="left:330px"><svg width="9" height="9" viewBox="0 0 9 9"><path d="M2 4.6 L3.8 6.3 L7.2 2.8" fill="none" stroke="#fff" stroke-width="1.2"/></svg></div><div class="a ctx" style="left:340px">T-min</div><div class="a chk" style="left:360px"><svg width="9" height="9" viewBox="0 0 9 9"><path d="M2 4.6 L3.8 6.3 L7.2 2.8" fill="none" stroke="#fff" stroke-width="1.2"/></svg></div><div class="a ctx" style="left:370px">Current Reading</div><div class="a" style="left:220px;top:629px;width:760px;height:1px;background:#a8a8a8"></div></body></html>
